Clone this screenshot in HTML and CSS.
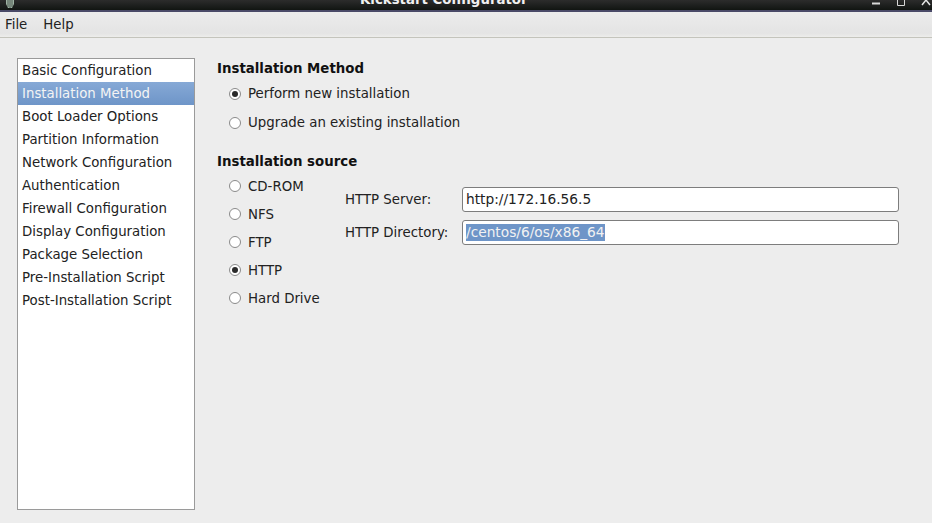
FILE: index.html
```html
<!DOCTYPE html>
<html lang="en">
<head>
<meta charset="utf-8">
<title>Kickstart Configurator</title>
<link rel="stylesheet" href="styles.css">
</head>
<body>
<div class="window">
  <header class="titlebar">
    <svg class="app-icon" width="14" height="9" viewBox="0 0 14 9"><path d="M3 0h8v4l-2 4H5L3 4z" fill="#9fb3a4"/><path d="M5 0v7M7 0v8M9 0v7" stroke="#4c5a50" stroke-width="1"/></svg>
    <span class="title">Kickstart Configurator</span>
    <div class="controls">
      <svg width="10" height="9" viewBox="0 0 10 9"><path d="M1 3.5h8" stroke="#d8d8d8" stroke-width="2"/></svg>
      <svg width="10" height="9" viewBox="0 0 10 9"><path d="M1.5 0v5.5h7V0" fill="none" stroke="#d8d8d8" stroke-width="1"/></svg>
      <svg width="10" height="9" viewBox="0 0 10 9"><path d="M1 5l4-5 4 5" fill="none" stroke="#e4e4e4" stroke-width="1.5"/></svg>
    </div>
  </header>
  <nav class="menubar"><span>File</span><span>Help</span></nav>
  <main class="content">
    <ul class="sidebar">
      <li>Basic Configuration</li>
      <li class="selected">Installation Method</li>
      <li>Boot Loader Options</li>
      <li>Partition Information</li>
      <li>Network Configuration</li>
      <li>Authentication</li>
      <li>Firewall Configuration</li>
      <li>Display Configuration</li>
      <li>Package Selection</li>
      <li>Pre-Installation Script</li>
      <li>Post-Installation Script</li>
    </ul>
    <section class="panel">
      <h2>Installation Method</h2>
      <div class="method-group">
        <div class="radio-row"><span class="radio checked"></span>Perform new installation</div>
        <div class="radio-row"><span class="radio"></span>Upgrade an existing installation</div>
      </div>
      <h2 class="source-title">Installation source</h2>
      <div class="source">
        <div class="source-list">
          <div class="radio-row"><span class="radio"></span>CD-ROM</div>
          <div class="radio-row"><span class="radio"></span>NFS</div>
          <div class="radio-row"><span class="radio"></span>FTP</div>
          <div class="radio-row"><span class="radio checked"></span>HTTP</div>
          <div class="radio-row"><span class="radio"></span>Hard Drive</div>
        </div>
        <div class="fields">
          <label>HTTP Server:</label>
          <div class="entry">http://172.16.56.5</div>
          <label>HTTP Directory:</label>
          <div class="entry"><span class="sel">/centos/6/os/x86_64</span></div>
        </div>
      </div>
    </section>
  </main>
</div>
</body>
</html>
```
FILE: styles.css
```css
* { box-sizing: border-box; }
html, body { margin: 0; height: 100%; }
body { font-family: "DejaVu Sans", sans-serif; font-size: 13.33px; color: #222; background: #ededed; overflow: hidden; }
.window { width: 932px; height: 523px; display: flex; flex-direction: column; }
.titlebar { height: 12px; flex: none; background: linear-gradient(#2c2c2c, #111512); border-bottom: 2px solid #4a4a68; position: relative; overflow: hidden; }
.app-icon { position: absolute; left: 3px; top: 0; }
.title { position: absolute; left: 360px; bottom: 3px; font-weight: bold; line-height: 14px; color: #f0f0f0; white-space: nowrap; }
.controls { position: absolute; right: 1px; top: 0; display: flex; gap: 15px; }
.menubar { height: 26px; flex: none; display: flex; gap: 16px; padding: 4px 0 0 5px; line-height: 17px; background: linear-gradient(#ececec, #e4e4e4 85%, #ededeb); border-bottom: 1px solid #c4c4bc; }
.content { flex: 1; display: flex; align-items: flex-start; padding: 20px 0 0 17px; }
.sidebar { list-style: none; margin: 0; padding: 0; width: 178px; height: 452px; flex: none; background: #fff; border: 1px solid #9a9a9a; line-height: 23px; }
.sidebar li { height: 23px; padding-left: 4px; white-space: nowrap; }
.sidebar .selected { background: linear-gradient(#86a9d6, #6e95c8); color: #f4f4f4; }
.panel { margin-left: 22px; flex: 1; }
h2 { margin: 0; font-size: 13.33px; font-weight: bold; line-height: 17px; color: #111; }
.panel > h2:first-child { margin-top: 2px; }
.source-title { margin-top: 16px; }
.method-group { margin-top: 2px; padding-left: 12px; }
.method-group .radio-row { height: 29px; }
.radio-row { display: flex; align-items: center; white-space: nowrap; }
.radio { width: 12px; height: 12px; border-radius: 50%; border: 1px solid #8a8a8a; background: #fff; margin-right: 7px; flex: none; position: relative; }
.radio.checked::after { content: ""; position: absolute; left: 2px; top: 2px; width: 6px; height: 6px; border-radius: 50%; background: #2a2a2a; }
.source { display: flex; margin-top: 2px; align-items: flex-start; }
.source-list { padding-left: 12px; width: 128px; flex: none; }
.source-list .radio-row { height: 28px; }
.fields { display: grid; grid-template-columns: 117px 437px; row-gap: 8px; align-items: center; margin-top: 15px; }
.entry { height: 25px; border: 1px solid #7d7d7d; border-radius: 3px; background: #fff; padding: 0 3px; font-size: 13.75px; line-height: 23px; white-space: nowrap; }
.sel { background: #6e95c8; color: #f2f2f2; display: inline-block; line-height: 17px; }
```
